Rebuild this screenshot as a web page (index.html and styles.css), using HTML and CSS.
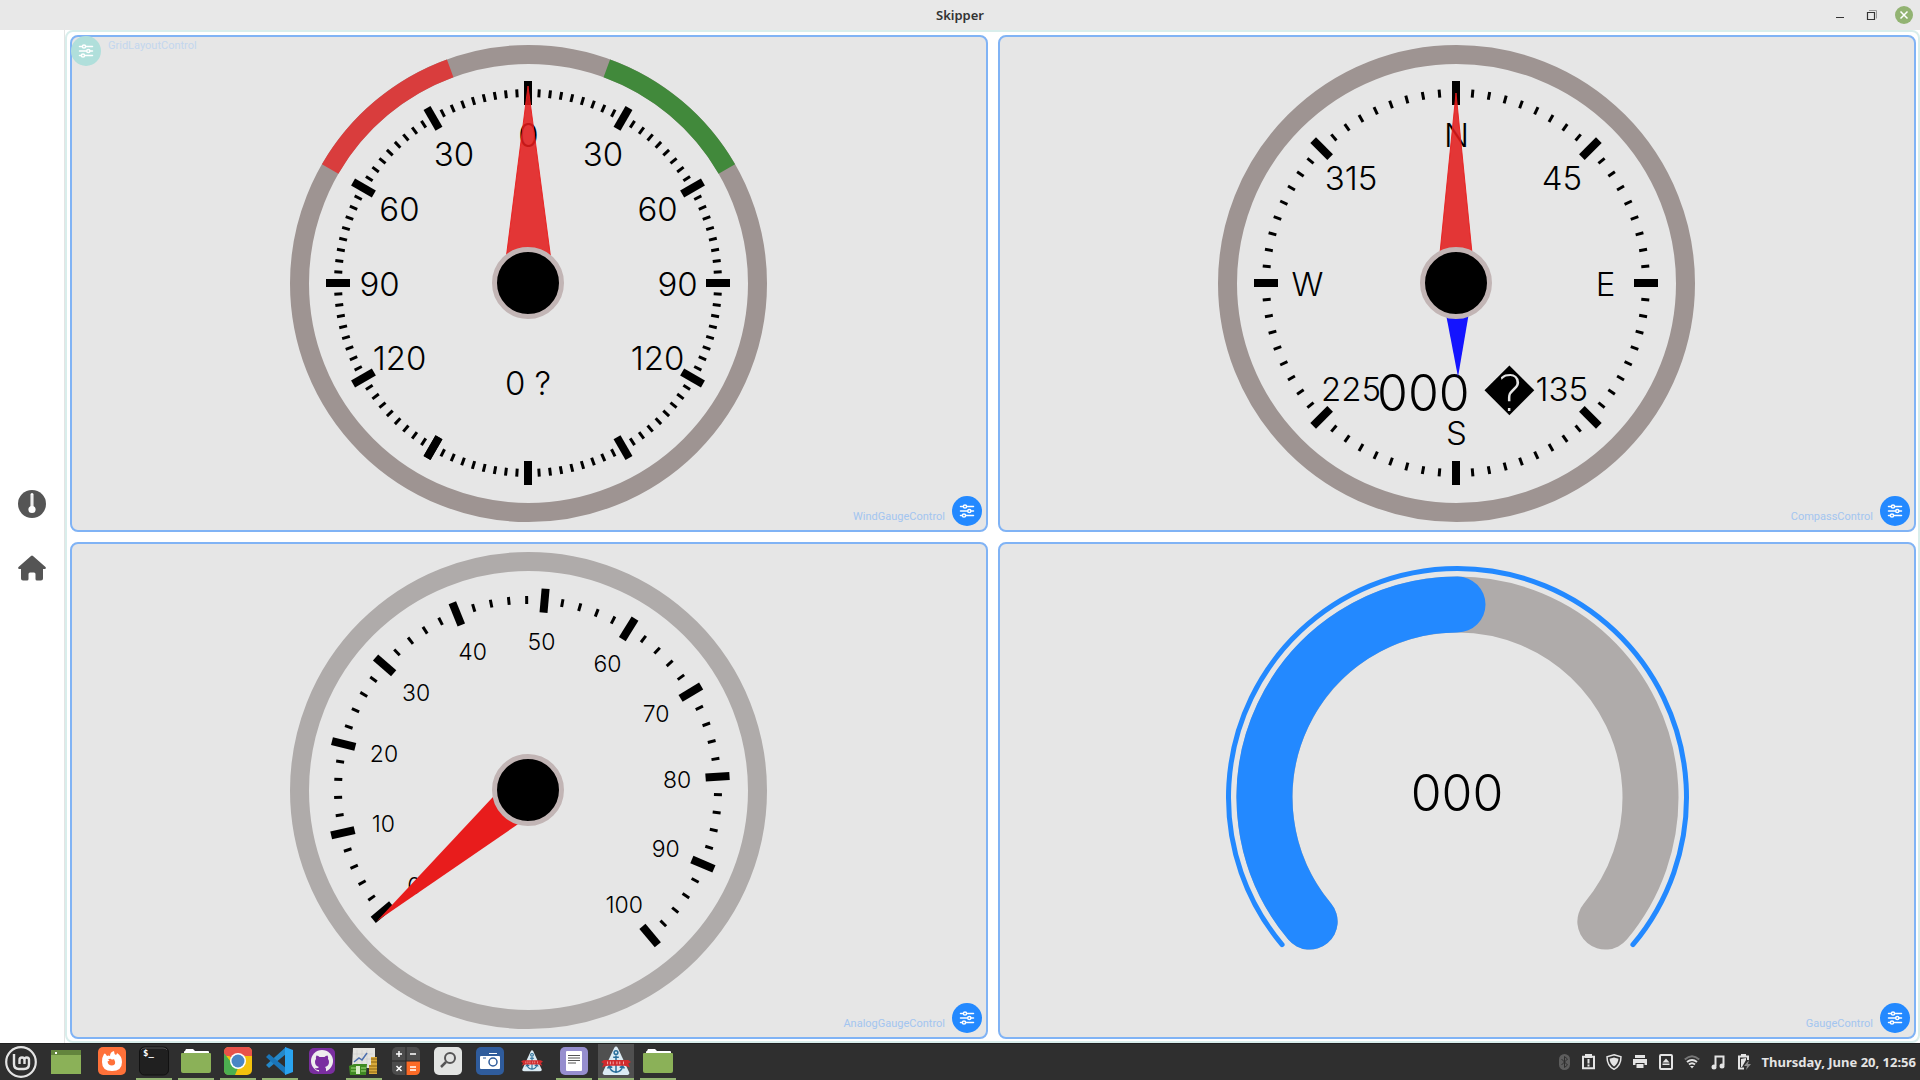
FILE: index.html
```html
<!DOCTYPE html>
<html lang="en">
    <head>
        <meta charset="utf-8">
        <title>Skipper</title>
        <link rel="stylesheet" href="styles.css">
    </head>
    <body>
        <svg class="defs" aria-hidden="true">
            <symbol id="i-sliders" viewBox="0 0 16 16">
                <g fill="none" stroke="currentColor" stroke-width="1.5" stroke-linecap="round">
                    <path d="M1.5 3.5H4M8 3.5h6.5M1.5 8H8M12 8h2.500M1.500 12.500H3M7 12.500h7.500"/>
                    <circle cx="6" cy="3.500" r="1.600"/>
                    <circle cx="10.300" cy="8" r="1.600"/>
                    <circle cx="5" cy="12.500" r="1.600"/>
                </g>
            </symbol>
            <symbol id="i-folder" viewBox="0 0 30 30">
                <path d="M3 9V6q0-1 1-1l1-2h7l2 2h13q1 0 1 1v3z" fill="#fff"/>
                <path d="M0 8q0-1 1-1h28q1 0 1 1v17q0 2-2 2H2q-2 0-2-2z" fill="#8bb158"/>
            </symbol>
            <symbol id="i-skipper" viewBox="0 0 32 32">
                <path d="M14 2q2-3 4 0l12 26q1 3-3 3H5q-4 0-3-3z" fill="#dcebf3"/>
                <g fill="none" stroke="#2a6f9b" stroke-width="1.600">
                    <circle cx="16" cy="7" r="2"/>
                    <path d="M16 10v18M13 12h6M9 22q1 5 7 6 6-1 7-6M7 24l2-3 3 2M25 24l-2-3-3 2"/>
                </g>
                <path d="M0 17l3-2 26 0 3 2-3 2 2 4q-4-2-6-2H7q-3 0-6 2l2-4z" fill="#d12a2d"/>
                <path d="M7 16.500v3M10 16.500v3M13 16.500v3M17 16.500v3M20 16.500v3M24 16.500v3" stroke="#f3b3b3"/>
            </symbol>
        </svg>

        <header class="titlebar">
            <h1 class="title">Skipper</h1>
            <div class="winbtns">
                <button class="winbtn" aria-label="Minimize">
                    <svg viewBox="0 0 18 18"><path d="M5 11.500h8" stroke="#333" fill="none"/></svg>
                </button>
                <button class="winbtn" aria-label="Restore">
                    <svg viewBox="0 0 18 18" fill="none"><path d="M6 4.500h7.500v8" stroke="#999"/><path d="M4.500 6.500h7v7h-7z" stroke="#333" stroke-width="1.200"/></svg>
                </button>
                <button class="winbtn close" aria-label="Close">
                    <svg viewBox="0 0 18 18"><path d="M5.500 5.500l7 7M12.500 5.500l-7 7" stroke="#fff" stroke-width="1.500"/></svg>
                </button>
            </div>
        </header>

        <div class="app">
            <nav class="sidebar">
                <button class="navbtn" aria-label="Gauges">
                    <svg viewBox="0 0 28 28"><circle cx="14" cy="14" r="14" fill="#555"/><path d="M14 4.500V19" stroke="#fff" stroke-width="3" stroke-linecap="round"/><path d="M14 5v14" stroke="#ddd"/><circle cx="14" cy="19.500" r="3.600" fill="#fff"/></svg>
                </button>
                <button class="navbtn" aria-label="Home">
                    <svg viewBox="0 0 28 28"><path d="M13 2q1-.9 2 0l12.500 11q1 1.500-.8 2H25v9.500q0 2-2 2h-4q-1.500 0-1.500-1.500v-5q0-1.500-1.500-1.500h-4q-1.500 0-1.500 1.500v5q0 1.500-1.500 1.500H5q-2 0-2-2V15H1.300Q-.5 14.500.5 13z" fill="#555"/></svg>
                </button>
            </nav>

            <main class="layout">
                <section class="card">
                    <svg class="gauge" id="wind" viewBox="-456 -246 914 493"></svg>
                    <div class="tool">
                        <span class="name">WindGaugeControl</span>
                        <button class="set" aria-label="WindGaugeControl settings"><svg><use href="#i-sliders"/></svg></button>
                    </div>
                </section>
                <section class="card">
                    <svg class="gauge" id="compass" viewBox="-456 -246 914 493"></svg>
                    <div class="tool">
                        <span class="name">CompassControl</span>
                        <button class="set" aria-label="CompassControl settings"><svg><use href="#i-sliders"/></svg></button>
                    </div>
                </section>
                <section class="card">
                    <svg class="gauge" id="analog" viewBox="-456 -246 914 493"></svg>
                    <div class="tool">
                        <span class="name">AnalogGaugeControl</span>
                        <button class="set" aria-label="AnalogGaugeControl settings"><svg><use href="#i-sliders"/></svg></button>
                    </div>
                </section>
                <section class="card">
                    <svg class="gauge" id="arc" viewBox="-456 -246 914 493"></svg>
                    <div class="tool">
                        <span class="name">GaugeControl</span>
                        <button class="set" aria-label="GaugeControl settings"><svg><use href="#i-sliders"/></svg></button>
                    </div>
                </section>
                <div class="tool grid-tool">
                    <button class="set" aria-label="GridLayoutControl settings"><svg><use href="#i-sliders"/></svg></button>
                    <span class="name">GridLayoutControl</span>
                </div>
            </main>
        </div>

        <footer class="taskbar">
            <button class="task menu" aria-label="Menu">
                <svg viewBox="0 0 32 32" fill="none" stroke="#e4e4e4"><circle cx="16" cy="16" r="14.800" stroke-width="2.200"/><path d="M9 8v10q0 5 5 5h5q5 0 5-5v-4q0-2.500-2.300-2.500T19.500 14v4M19.500 14q0-2.500-2.500-2.500T14.500 14v4" stroke-width="2.400"/></svg>
            </button>
            <button class="task" aria-label="Desktop">
                <svg viewBox="0 0 30 30"><path d="M0 4h30v24H0z" fill="#8bb158"/><path d="M0 4h30v5H0z" fill="#63853d"/><path d="M4 6h2v2H4z" fill="#fff"/></svg>
            </button>
            <button class="task firefox" aria-label="Firefox">
                <svg viewBox="0 0 30 30"><rect x="1" y="1" width="28" height="28" rx="5" fill="#ff7139"/><path d="M7 8q1-1 1.500 0l1.500 2q2-1 3 0 0-4 4-5 0 3 2 4 1-1 1-2 5 3 5 9 0 9-10 9T5 16q0-5 2-8z" fill="#fff"/><path d="M11 13.500q2-1 3-.5 1 1 3 0 3 6-2 6.500-4 0-4.500-4l2-1z" fill="#ff7139"/></svg>
            </button>
            <button class="task open" aria-label="Terminal">
                <svg viewBox="0 0 30 30"><rect x=".5" y="1" width="29" height="28" rx="5" fill="#202020" stroke="#111"/><path d="M2 4q1-2 4-2h18q3 0 4 2" fill="none" stroke="#555"/><text x="4" y="10" class="prompt">$_</text></svg>
            </button>
            <button class="task open" aria-label="Files"><svg><use href="#i-folder"/></svg></button>
            <button class="task open" aria-label="Chrome">
                <svg viewBox="0 0 30 30"><rect x="1" y="1" width="28" height="28" rx="5" fill="#f4c20d"/><path d="M1 10V6q0-5 5-5h18q5 0 5 5v4z" fill="#e8524a"/><path d="M1 7l10 13 4 2-3 7H6q-5 0-5-5z" fill="#4caf50"/><path d="M1 7l6-3 4 9z" fill="#e8524a"/><circle cx="15" cy="15" r="8" fill="#fff"/><circle cx="15" cy="15" r="6.500" fill="#4a86c5"/></svg>
            </button>
            <button class="task open" aria-label="Code">
                <svg viewBox="0 0 30 30"><path d="M21 1v7L4 22l-3-3z" fill="#2489ca"/><path d="M21 29v-7L4 8l-3 3z" fill="#1a75b8"/><path d="M20 1l8 3v22l-8 3z" fill="#2aa4f0"/></svg>
            </button>
            <button class="task" aria-label="GitHub">
                <svg viewBox="0 0 30 30"><rect x="2" y="2" width="26" height="26" rx="5" fill="#7a2ea0"/><circle cx="15" cy="15" r="11" fill="#eee"/><path d="M12 27v-3q-3 .5-4.500-2 3 1 4.500-1-4-1-4-5 0-2 1-3-.5-2 .5-3.500 2 0 3 1.500h5q1-1.500 3-1.500 1 1.500.5 3.500 1 1 1 3 0 4-4 5 1 1 1 2v4z" fill="#7a2ea0"/></svg>
            </button>
            <button class="task open" aria-label="Money Manager">
                <svg viewBox="0 0 30 30"><path d="M4 2h22v20H3z" fill="#e3e3df"/><path d="M8 4v16M13 4v16M18 4v16M4 8h20M4 13h20" stroke="#c4c4c4" stroke-width=".5"/><path d="M5 16l5-4 3 2 5-7" fill="none" stroke="#4b6fae" stroke-width="1.500"/><path d="M0 20l5-2h13l-1 11H1z" fill="#3f8a22"/><path d="M2 22h5M2 25h5M12 22h5M12 25h5" stroke="#a4dc7d"/><path d="M7 20h4v8H7z" fill="#d8edc8"/><path d="M22 11h6v17h-8V19h2z" fill="#d9a93a"/><path d="M22 13h6M22 16h6M20 20h8M20 23h8M20 26h8" stroke="#8a6412"/></svg>
            </button>
            <button class="task" aria-label="Calculator">
                <svg viewBox="0 0 30 30"><rect x="1" y="1" width="28" height="28" rx="5" fill="#4c4c4c"/><path d="M15 15h14v9q0 5-5 5h-9z" fill="#fb6a26"/><path d="M15 1v28M1 15h28" stroke="#262626"/><path d="M5 8h6M8 5v6M19 8h6M5.500 20l5 5M10.500 20l-5 5M19 21h6M19 24h6" stroke="#fff" stroke-width="1.500"/></svg>
            </button>
            <button class="task" aria-label="Search">
                <svg viewBox="0 0 30 30"><rect x="1" y="1" width="28" height="28" rx="5" fill="#e2e4e2"/><circle cx="17" cy="12" r="5" fill="none" stroke="#555" stroke-width="2"/><path d="M13 16l-5 5" stroke="#555" stroke-width="2.500"/></svg>
            </button>
            <button class="task" aria-label="Screenshot">
                <svg viewBox="0 0 30 30"><rect x="1" y="1" width="28" height="28" rx="5" fill="#2f5c9c"/><rect x="5" y="10" width="20" height="13" rx="1" fill="#fff"/><path d="M14 7.500h8" stroke="#fff"/><circle cx="18" cy="16" r="4" fill="none" stroke="#2f5c9c" stroke-width="1.500"/><path d="M8 12h3" stroke="#2f5c9c"/></svg>
            </button>
            <button class="task small" aria-label="Skipper launcher"><svg><use href="#i-skipper"/></svg></button>
            <button class="task open" aria-label="Text Editor">
                <svg viewBox="0 0 30 30"><rect x="1" y="1" width="28" height="28" rx="5" fill="#968ece"/><rect x="7" y="5" width="16" height="20" rx="1" fill="#fff"/><path d="M9 9.500h12M9 12h12M9 14.500h12M9 17h8" stroke="#555"/></svg>
            </button>
            <button class="task open current" aria-label="Skipper"><svg><use href="#i-skipper"/></svg></button>
            <button class="task open" aria-label="Folder"><svg><use href="#i-folder"/></svg></button>

            <div class="tray">
                <svg viewBox="0 0 16 16"><rect x="5" y="0" width="11" height="16" rx="5.500" fill="#5d5d5d"/><path d="M7.500 5l6 6-3 2.500v-11l3 2.500-6 6" fill="none" stroke="#2f2f2f"/></svg>
                <svg viewBox="0 0 16 16"><path d="M3 2.800h11v11.500H3z" fill="none" stroke="#e4e4e4" stroke-width="2"/><path d="M5 0h7v4H5z" fill="#e4e4e4"/><path d="M8.500 5v4.500M8.500 10.500v2" stroke="#e4e4e4" stroke-width="2"/></svg>
                <svg viewBox="0 0 16 16"><path d="M8 .8l7 2q0 9-7 12.500Q1 12 1 2.800z" fill="none" stroke="#e4e4e4" stroke-width="1.500"/><path d="M8 3.500l4.500 1.300Q12 10 8 12.500 4 10 3.500 4.800z" fill="#e4e4e4"/></svg>
                <svg viewBox="0 0 16 16"><path d="M3 1h10v3H3zM1 5h14v6h-2.500V9h-9v2H1zM4.500 10h7v4h-7z" fill="#e4e4e4"/></svg>
                <svg viewBox="0 0 16 16"><rect x="2" y="1" width="12" height="14" rx="1" fill="none" stroke="#e4e4e4" stroke-width="2"/><path d="M8 4.500l3.500 4h-7zM4.500 9.500h7v1.500h-7z" fill="#e4e4e4"/></svg>
                <svg viewBox="0 0 16 16" fill="none" stroke-width="2"><path d="M.8 5.500Q8-1 15.200 5.500" stroke="#777"/><path d="M3 8q5-4 10 0M5 10.500q3-2.500 6 0" stroke="#e4e4e4"/><path d="M6 12h4l-2 2.500z" fill="#e4e4e4"/></svg>
                <svg viewBox="0 0 16 16"><path d="M5.500 12V2.500h8V11" fill="none" stroke="#e4e4e4" stroke-width="2"/><circle cx="4" cy="13" r="2.500" fill="#e4e4e4"/><circle cx="12" cy="12" r="2.500" fill="#e4e4e4"/></svg>
                <svg viewBox="0 0 16 16"><path d="M12 6V2.500H3v12h5" fill="none" stroke="#e4e4e4" stroke-width="2"/><path d="M5 0h5v2H5zM5 5l5-1v2l-4 7H5z" fill="#e4e4e4"/><path d="M13 6l-5 6h3l-1 4 5-6h-3z" fill="#8d8d8d"/></svg>
                <time class="clock">Thursday, June 20, 12:56</time>
            </div>
        </footer>

        <script>
            var NS = "http://www.w3.org/2000/svg";
            var add = function(id, tag, attrs, text) {
                var el = document.createElementNS(NS, tag);
                for(var key in attrs) {
                    el.setAttribute(key, attrs[key]);
                }
                if(text !== undefined) {
                    el.textContent = text;
                }
                document.getElementById(id).appendChild(el);
            }
            // angle in degrees, 0 is up, clockwise
            var polar = function(r, angle, cx, cy) {
                var a = angle * Math.PI / 180;
                return (cx + r * Math.sin(a)).toFixed(2) + " " + (cy - r * Math.cos(a)).toFixed(2);
            }
            var arc = function(id, cls, r, from, to, cx, cy) {
                var large = to - from > 180 ? 1 : 0;
                add(id, "path", {
                    "class": cls,
                    d: "M" + polar(r, from, cx, cy) + "A" + r + " " + r + " 0 " + large + " 1 " + polar(r, to, cx, cy)
                });
            }
            var ring = function(id, cls) {
                add(id, "circle", {"class": "ring " + cls, cx: 0.5, cy: 0.5, r: 229});
            }
            // count intervals, every nth tick is a major one with its label
            var ticks = function(id, start, step, count, nth, labels, cls) {
                for(var i = 0;i <= count;i++) {
                    var a = start + i * step;
                    var major = i % nth == 0;
                    var half = major ? 12 : 4;
                    add(id, "path", {
                        "class": major ? "major" : "minor",
                        d: "M" + polar(190 - half, a, 0, 0) + "L" + polar(190 + half, a, 0, 0)
                    });
                    if(major && labels[i / nth] !== undefined) {
                        var p = polar(149, a, 0.5, 0.5).split(" ");
                        add(id, "text", {"class": cls, x: p[0], y: p[1]}, labels[i / nth]);
                    }
                }
            }
            var hub = function(id) {
                add(id, "circle", {"class": "hub", r: 33.5});
            }

            ring("wind", "dark");
            arc("wind", "ring port", 229, -60, -20, 0.5, 0.5);
            arc("wind", "ring starboard", 229, 20, 60, 0.5, 0.5);
            ticks("wind", -150, 30 / 9, 99, 9, ["", 120, 90, 60, 30, 0, 30, 60, 90, 120, "", ""], "label");
            ticks("wind", 180, 30 / 9, 9, 9, [], "label");
            add("wind", "text", {"class": "label", x: 0, y: 100}, "0 ?");
            add("wind", "path", {"class": "needle glass", d: "M0 -197L26 0H-25z"});
            hub("wind");

            ring("compass", "dark");
            ticks("compass", 0, 5, 71, 9, ["N", 45, "E", 135, "S", 225, "W", 315], "label");
            add("compass", "text", {"class": "value", x: 0, y: 110}, "000 \uFFFD");
            add("compass", "path", {"class": "needle glass", d: "M0 -190L19 0H-19z"});
            add("compass", "path", {"class": "needle south", d: "M2 94L18 0H-16z"});
            hub("compass");

            ring("analog", "light");
            ticks("analog", -130, 5.4, 50, 5, [0, 10, 20, 30, 40, 50, 60, 70, 80, 90, 100], "label little");
            add("analog", "path", {"class": "needle", d: "M-151 131L-6 -24L18 15z"});
            hub("analog");

            arc("arc", "track", 193, -130, 130, 1.5, 7.5);
            arc("arc", "track fill", 193, -130, 0, 1.5, 7.5);
            arc("arc", "outline", 229, -130, 130, 1.5, 7.5);
            add("arc", "text", {"class": "value", x: 1, y: 3}, "000");
        </script>
    </body>
</html>
```
FILE: styles.css
```css
*{
    padding: 0;
    margin: 0;
    box-sizing: border-box;
}
body {
    min-height: 100vh;
    display: flex;
    flex-direction: column;
    background-color: #fff;
    font-family: "Noto Sans", "Open Sans", sans-serif;
}
button {
    border: 0;
    background: none;
    cursor: pointer;
}
svg {
    display: block;
}
.defs {
    width: 0;
    height: 0;
    position: absolute;
}

/* title bar */
.titlebar {
    height: 30px;
    display: grid;
    grid-template-columns: 1fr auto 1fr;
    align-items: center;
    background-color: #e8e8e8;
}
.title {
    grid-column: 2;
    font-size: 13px;
    line-height: 20px;
    font-weight: 600;
    color: #333;
}
.winbtns {
    display: flex;
    justify-content: flex-end;
    gap: 14px;
    padding-right: 7px;
}
.winbtn {
    width: 18px;
    height: 18px;
}
.close {
    border-radius: 50%;
    background-color: #92b372;
}

/* content */
.app {
    flex: 1;
    display: flex;
}
.sidebar {
    width: 65px;
    display: flex;
    flex-direction: column;
    justify-content: center;
    align-items: center;
    gap: 36px;
    padding-bottom: 2px;
    border-right: 1px solid #e4e4e4;
}
.navbtn {
    width: 28px;
    height: 28px;
}
.layout {
    flex: 1;
    position: relative;
    display: grid;
    grid-template-columns: 1fr 1fr;
    grid-template-rows: 1fr 1fr;
    gap: 10px;
    padding: 3px 2px 2px 3px;
    border: 2px solid #d9eeec;
    border-radius: 8px;
}
.card {
    position: relative;
    min-width: 0;
    min-height: 0;
    border: 2px solid #80b3f5;
    border-radius: 8px;
    background-color: #e6e6e6;
}
.tool {
    position: absolute;
    right: 4px;
    bottom: 4px;
    display: flex;
    align-items: center;
    gap: 7px;
}
.name {
    padding-top: 12px;
    font-family: Roboto, sans-serif;
    font-size: 11px;
    line-height: 16px;
    color: #a3c5f0;
}
.set {
    width: 30px;
    height: 30px;
    display: flex;
    justify-content: center;
    align-items: center;
    border-radius: 50%;
    color: #fff;
    background-color: #2389ff;
}
.set svg {
    width: 16px;
    height: 16px;
}
.grid-tool {
    top: 4px;
    right: auto;
    bottom: auto;
    left: 4px;
    align-items: flex-start;
}
.grid-tool .set {
    background-color: #b0dfdb;
}
.grid-tool .name {
    padding-top: 2px;
    color: #c3d6ee;
}

/* gauges */
.gauge {
    width: 100%;
    height: 100%;
}
.ring {
    fill: none;
    stroke-width: 19;
}
.dark {
    stroke: #9e9492;
}
.light {
    stroke: #afabaa;
}
.port {
    stroke: #d93d3d;
}
.starboard {
    stroke: #41893b;
}
.major {
    stroke: #000;
    stroke-width: 8;
}
.minor {
    stroke: #000;
    stroke-width: 3;
}
.label, .value {
    font-family: Inter, "DejaVu Sans", sans-serif;
    font-size: 33px;
    font-weight: 300;
    text-anchor: middle;
    dominant-baseline: central;
}
.little {
    font-size: 23px;
}
.value {
    font-size: 50px;
}
.needle {
    fill: #e81c1c;
}
.glass {
    fill: #e21b1b;
    fill-opacity: .87;
    stroke: #e91c1c;
    stroke-opacity: .9;
}
.south {
    fill: #1414ff;
}
.hub {
    fill: #000;
    stroke: #c2b5b5;
    stroke-width: 5;
}
.track {
    fill: none;
    stroke: #afabaa;
    stroke-width: 56;
    stroke-linecap: round;
}
.fill {
    stroke: #2389ff;
}
.outline {
    fill: none;
    stroke: #2389ff;
    stroke-width: 5;
    stroke-linecap: round;
}

/* task bar */
.taskbar {
    height: 37px;
    display: flex;
    gap: 6px;
    background-color: #2f2f2f;
    border-top: 1px solid #222;
}
.task {
    width: 36px;
    height: 36px;
    padding: 2px 3px;
    border-bottom: 2px solid transparent;
}
.task svg {
    width: 30px;
    height: 30px;
}
.menu {
    width: 42px;
    padding: 2px 5px 0;
}
.menu svg {
    width: 32px;
    height: 32px;
}
.firefox {
    margin-left: 4px;
}
.open {
    border-bottom-color: #92b372;
}
.small {
    padding: 6px;
}
.small svg {
    width: 24px;
    height: 22px;
}
.current {
    background-color: #505050;
}
.prompt {
    font-family: "DejaVu Sans Mono", monospace;
    font-size: 9px;
    font-weight: bold;
    fill: #fff;
}
.tray {
    margin-left: auto;
    display: flex;
    align-items: center;
    gap: 10px;
    padding-right: 4px;
}
.tray svg {
    width: 16px;
    height: 16px;
}
.clock {
    font-size: 13px;
    line-height: 20px;
    font-weight: 700;
    color: #e4e4e4;
}
```
